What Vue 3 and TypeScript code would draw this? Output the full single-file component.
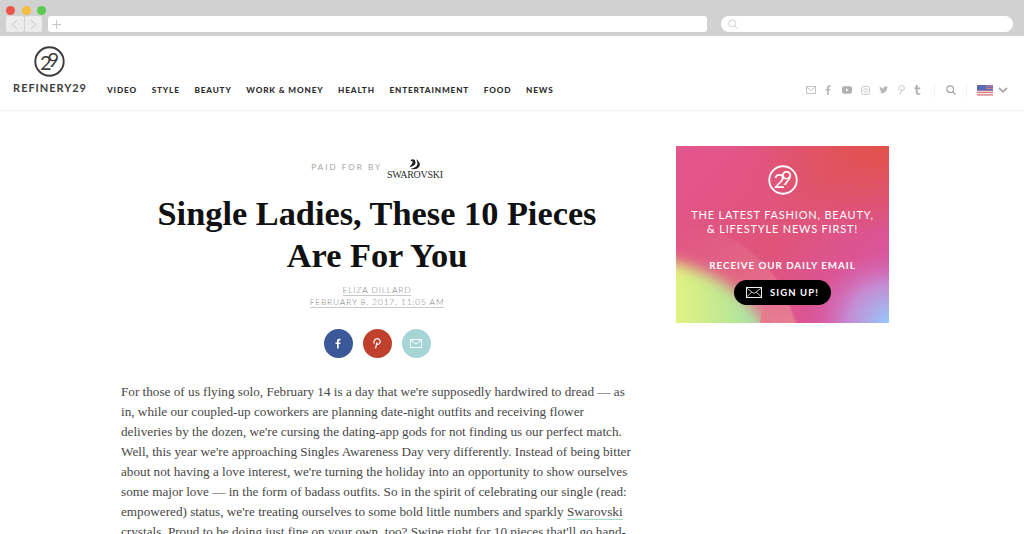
<script setup lang="ts">
const nav: string[] = ['VIDEO', 'STYLE', 'BEAUTY', 'WORK & MONEY', 'HEALTH', 'ENTERTAINMENT', 'FOOD', 'NEWS']
const lines: string[] = [
  "For those of us flying solo, February 14 is a day that we're supposedly hardwired to dread — as",
  "in, while our coupled-up coworkers are planning date-night outfits and receiving flower",
  "deliveries by the dozen, we're cursing the dating-app gods for not finding us our perfect match.",
  "Well, this year we're approaching Singles Awareness Day very differently. Instead of being bitter",
  "about not having a love interest, we're turning the holiday into an opportunity to show ourselves",
  "some major love — in the form of badass outfits. So in the spirit of celebrating our single (read:",
]
</script>

<template>
  <div class="page">
    <div class="chrome">
      <div class="dots">
        <i class="dot red"></i><i class="dot yellow"></i><i class="dot green"></i>
      </div>
      <div class="toolbar">
        <div class="arrows">
          <span class="arrow">
            <svg width="7" height="11" viewBox="0 0 7 11"><path d="M6 1 1.500 5.500 6 10" fill="none" stroke="#c4c4c4" stroke-width="1"/></svg>
          </span>
          <span class="arrow">
            <svg width="7" height="11" viewBox="0 0 7 11"><path d="M1 1 5.500 5.500 1 10" fill="none" stroke="#c4c4c4" stroke-width="1"/></svg>
          </span>
        </div>
        <div class="address">
          <svg width="9" height="9" viewBox="0 0 9 9"><path d="M4.500 0v9M0 4.500h9" stroke="#c8c8c8" stroke-width="1"/></svg>
        </div>
        <div class="search">
          <svg width="10" height="10" viewBox="0 0 10 10"><circle cx="4.300" cy="4.300" r="3.500" fill="none" stroke="#cfcfcf"/><path d="m7 7 2.500 2.500" stroke="#cfcfcf"/></svg>
        </div>
      </div>
    </div>

    <header class="header">
      <div class="brand">
        <svg class="brand-mark" width="31" height="31" viewBox="0 0 31 31">
          <circle cx="15.500" cy="15.500" r="14.200" fill="none" stroke="#3c3c3c" stroke-width="1.900"/>
          <text x="6" y="24" class="mark-text" fill="#3c3c3c">2<tspan dy="-3">9</tspan></text>
        </svg>
        <div class="brand-name">REFINERY29</div>
      </div>
      <nav class="nav">
        <a v-for="item in nav" :key="item" class="nav-item">{{ item }}</a>
      </nav>
      <div class="tools">
        <svg class="tool" width="10" height="8" viewBox="0 0 10 8"><rect x=".5" y=".5" width="9" height="7" fill="none" stroke="#c4c4c4"/><path d="m.5 1 4.500 3.500L9.500 1" fill="none" stroke="#c4c4c4"/></svg>
        <svg class="tool wide" width="6" height="10" viewBox="0 0 6 10"><path d="M2 10V5.500H.5V4H2V2.500C2 1 3 .3 4.200.3H5.500V2H4.500c-.5 0-.8.200-.8.700V4h1.800l-.3 1.500H3.700V10z" fill="#b8b8b8"/></svg>
        <svg class="tool" width="10" height="8" viewBox="0 0 11 8"><rect width="11" height="8" rx="2" fill="#b0b0b0"/><path d="m4.500 2.200 2.700 1.800-2.700 1.800z" fill="#fff"/></svg>
        <svg class="tool" width="9" height="9" viewBox="0 0 9 9"><rect x=".5" y=".5" width="8" height="8" rx="2" fill="none" stroke="#c8c8c8"/><circle cx="4.500" cy="4.500" r="1.800" fill="none" stroke="#c8c8c8"/></svg>
        <svg class="tool mid" width="9" height="8" viewBox="0 0 9 8"><path d="M9 1c-.3.200-.7.300-1 .3.400-.2.600-.5.800-.9-.4.200-.7.300-1.100.4A1.800 1.800 0 0 0 4.600 2.400C3.100 2.300 1.800 1.600.9.500.4 1.300.6 2.400 1.400 3c-.3 0-.6-.1-.8-.2 0 .9.600 1.600 1.400 1.800-.3.100-.5.100-.8 0 .2.700.9 1.200 1.700 1.300A3.700 3.700 0 0 1 0 6.600C3.900 8.600 8.300 6 8.100 2c.4-.3.700-.6.900-1z" fill="#b8b8b8"/></svg>
        <svg class="tool" width="7" height="10" viewBox="0 0 7 10"><path d="M2.200 9.500 3.500 4M1 5C.2 2.800 1.700 .6 3.700 .6c2.300 0 3 2 2.500 3.600C5.700 5.800 4 6.300 3 5.200" fill="none" stroke="#c4c4c4" stroke-width="1"/></svg>
        <svg class="tool last" width="7" height="10" viewBox="0 0 7 10"><path d="M2 0h1.700v2.500h2.400V4.300H3.700v3c0 1 1 1.100 2.600.6v1.500C3.800 10.300 1.800 9.800 1.800 7.500V4.300H.5V3C1.500 2.700 1.900 1.500 2 0z" fill="#b0b0b0"/></svg>
        <i class="divider"></i>
        <svg class="tool-search" width="10" height="10" viewBox="0 0 10 10"><circle cx="4.200" cy="4.200" r="3.300" fill="none" stroke="#a8a8a8" stroke-width="1.200"/><path d="m6.700 6.700 2.800 2.800" stroke="#a8a8a8" stroke-width="1.400"/></svg>
        <i class="divider"></i>
        <svg class="flag" width="16" height="11" viewBox="0 0 16 11">
          <rect width="16" height="11" fill="#f4f1f3"/>
          <path d="M0 .8h16M0 3h16M0 5.200h16M0 7.400h16M0 9.800h16" stroke="#de7079" stroke-width="1.200"/>
          <rect width="16" height="5.500" fill="#4a64b8" opacity=".92"/>
          <path d="M9 1h7M9 3.300h7" stroke="#e58088" stroke-width="1"/>
        </svg>
        <svg width="10" height="6" viewBox="0 0 10 6"><path d="M1 1 5 4.800 9 1" fill="none" stroke="#a9a9a9" stroke-width="1.800"/></svg>
      </div>
    </header>

    <main class="main">
      <article class="article">
        <div class="sponsor">
          <span class="paid">PAID FOR BY</span>
          <div class="swarovski">
            <svg width="13" height="11" viewBox="0 0 14 12"><path d="M5 .3C3.600.3 2.800 1.200 2.800 2.400c.8-.6 2-.4 2.200.5.300 1.400-1.600 3.200-3.400 6 3.600-.4 6.400-2.300 6.500-5C8.200 2.100 6.800.3 5 .3zM9.500 0C8.800 2.500 10.800 3.500 10.200 6 9.600 8.500 6.500 10 2.800 10.600c3.900 1.400 8.400.2 9.800-3.300C13.800 4.300 10.800 2.800 9.500 0z" fill="#1e1e1e"/></svg>
            <span class="swarovski-name">SWAROVSKI</span>
          </div>
        </div>
        <h1 class="title">Single Ladies, These 10 Pieces<br>Are For You</h1>
        <div class="byline"><span>ELIZA DILLARD</span></div>
        <div class="byline date"><span>FEBRUARY 8, 2017, 11:05 AM</span></div>
        <div class="share">
          <span class="round fb">
            <svg width="6" height="11" viewBox="0 0 6 10"><path d="M2 10V5.500H.5V4H2V2.500C2 1 3 .3 4.200.3H5.500V2H4.500c-.5 0-.8.200-.8.700V4h1.800l-.3 1.500H3.700V10z" fill="#fff"/></svg>
          </span>
          <span class="round pin">
            <svg width="8" height="11" viewBox="0 0 7 10"><path d="M2.200 9.500 3.500 4M1 5C.2 2.800 1.700 .6 3.700 .6c2.300 0 3 2 2.500 3.600C5.700 5.800 4 6.300 3 5.200" fill="none" stroke="#fff" stroke-width="1.100"/></svg>
          </span>
          <span class="round mail">
            <svg width="12" height="9" viewBox="0 0 12 9"><rect x=".5" y=".5" width="11" height="8" fill="none" stroke="#fff"/><path d="m.5 1 5.500 4 5.500-4" fill="none" stroke="#fff"/></svg>
          </span>
        </div>
        <div class="body">
          <p v-for="line in lines" :key="line" class="line">{{ line }}</p>
          <p class="line">empowered) status, we're treating ourselves to some bold little numbers and sparkly <a class="link">Swarovski</a></p>
          <p class="line">crystals. Proud to be doing just fine on your own, too? Swipe right for 10 pieces that'll go hand-</p>
        </div>
      </article>

      <aside class="ad">
        <svg class="ad-art" width="213" height="177" viewBox="0 0 213 177" preserveAspectRatio="none">
          <defs>
            <linearGradient id="adBase" x1="0" y1="0" x2="1" y2=".75">
              <stop offset="0" stop-color="#e3568f"/>
              <stop offset=".55" stop-color="#df5478"/>
              <stop offset="1" stop-color="#d955a2"/>
            </linearGradient>
            <radialGradient id="adRed" cx="1" cy="0" r="1">
              <stop offset="0" stop-color="#e2524a"/>
              <stop offset="1" stop-color="#e2524a" stop-opacity="0"/>
            </radialGradient>
            <radialGradient id="adBlue" cx="1" cy="1" r="1">
              <stop offset="0" stop-color="#96c8fb"/>
              <stop offset=".5" stop-color="#c58bd2"/>
              <stop offset="1" stop-color="#d955a2" stop-opacity="0"/>
            </radialGradient>
            <linearGradient id="adGreen" x1="0" y1="0" x2="1" y2="0">
              <stop offset="0" stop-color="#eff77c"/>
              <stop offset=".5" stop-color="#c5ea8e"/>
              <stop offset="1" stop-color="#9bdfb0"/>
            </linearGradient>
            <linearGradient id="adSalmon" x1="0" y1="0" x2="1" y2="1">
              <stop offset="0" stop-color="#e36f92" stop-opacity="0"/>
              <stop offset="1" stop-color="#ea8493"/>
            </linearGradient>
            <filter id="adBlur1" x="-30%" y="-30%" width="160%" height="160%"><feGaussianBlur stdDeviation="7"/></filter>
            <filter id="adBlur2" x="-30%" y="-30%" width="160%" height="160%"><feGaussianBlur stdDeviation="1.200"/></filter>
          </defs>
          <rect width="213" height="177" fill="url(#adBase)"/>
          <rect x="70" width="143" height="90" fill="url(#adRed)"/>
          <rect x="130" y="100" width="83" height="77" fill="url(#adBlue)"/>
          <path d="M0 80C40 78 85 100 110 150L125 190H0z" fill="url(#adSalmon)" filter="url(#adBlur2)"/>
          <path d="M-20 112C30 122 75 142 100 200H-20z" fill="url(#adGreen)" filter="url(#adBlur1)"/>
          <path d="M84 177 87 162 97 177z" fill="#e77a8a"/>
        </svg>
        <svg class="ad-logo" width="30" height="30" viewBox="0 0 31 31">
          <circle cx="15.500" cy="15.500" r="14.200" fill="none" stroke="#fff" stroke-width="1.900"/>
          <text x="6" y="24" class="mark-text" fill="#fff">2<tspan dy="-3">9</tspan></text>
        </svg>
        <div class="ad-head">THE LATEST FASHION, BEAUTY,<br>&amp; LIFESTYLE NEWS FIRST!</div>
        <div class="ad-sub">RECEIVE OUR DAILY EMAIL</div>
        <div class="ad-btn">
          <svg width="16" height="11" viewBox="0 0 16 11"><rect x=".5" y=".5" width="15" height="10" fill="none" stroke="#eee"/><path d="m.5 1 7.500 5.500L15.500 1M.5 10 6 5M15.500 10 10 5" fill="none" stroke="#eee" stroke-width=".8"/></svg>
          <span>SIGN UP!</span>
        </div>
      </aside>
    </main>
  </div>
</template>

<style>
html, body { margin: 0; background: #fff; overflow: hidden; }
</style>

<style scoped>
.page { width: 1024px; height: 534px; overflow: hidden; background: #fff; font-family: "Lato", sans-serif; }

.chrome { height: 36px; background: #d1d1d1; box-sizing: border-box; padding-top: 4px; }
.dots { display: flex; gap: 6.500px; padding-left: 6px; height: 12px; align-items: center; }
.dot { width: 9px; height: 9px; border-radius: 50%; display: block; }
.red { background: #ec5349; }
.yellow { background: #f5bd3e; }
.green { background: #5cc94f; }
.toolbar { display: flex; height: 16px; padding-left: 6px; }
.arrows { display: flex; gap: 1px; }
.arrow { width: 17.500px; height: 16px; background: #ececec; display: flex; align-items: center; justify-content: center; border-radius: 2px; }
.address { width: 659px; margin-left: 6px; background: #fff; border-radius: 3px; display: flex; align-items: center; padding-left: 4px; box-sizing: border-box; }
.search { width: 292px; margin-left: 14px; background: #fff; border-radius: 8px; display: flex; align-items: center; padding-left: 7px; box-sizing: border-box; }

.header { height: 75px; box-sizing: border-box; border-bottom: 1px solid #f1f1f1; display: flex; align-items: flex-end; position: relative; }
.brand { width: 72px; margin-left: 14px; display: flex; flex-direction: column; align-items: center; padding-bottom: 16px; }
.brand-mark { display: block; margin-bottom: 4px; margin-left: -1px; }
.brand-name { font-size: 11px; font-weight: 700; color: #3e3e3e; letter-spacing: .950px; line-height: 13px; white-space: nowrap; }
.mark-text { font-family: "Lato", sans-serif; font-weight: 400; font-size: 20px; letter-spacing: -4.200px; }
.nav { display: flex; gap: 14.700px; margin-left: 21px; padding-bottom: 14px; }
.nav-item { font-size: 8.200px; font-weight: 900; color: #2d2d2d; letter-spacing: .850px; line-height: 12px; white-space: nowrap; }
.tools { position: absolute; left: 806px; top: 47px; display: flex; align-items: center; height: 14px; }
.tool { margin-right: 9px; display: block; }
.tool.wide { margin-right: 11px; }
.tool.mid { margin-right: 10px; }
.tool.last { margin-right: 13px; }
.divider { width: 1px; height: 14px; background: #f1f1f1; display: block; }
.tool-search { margin: 0 10px 0 11px; }
.flag { margin: 0 5px 0 10px; }

.main { display: flex; align-items: flex-start; }
.article { width: 512px; margin-left: 121px; display: flex; flex-direction: column; align-items: center; }
.sponsor { display: flex; align-items: flex-end; justify-content: center; height: 25px; margin-top: 45px; gap: 5px; box-sizing: border-box; width: 100%; }
.paid { font-size: 8px; color: #a3a3a3; letter-spacing: 2.050px; line-height: 10px; font-weight: 400; padding-bottom: 9px; }
.swarovski { display: flex; flex-direction: column; align-items: center; }
.swarovski svg { margin-bottom: -1px; }
.swarovski-name { font-family: "Liberation Serif", serif; font-size: 10px; color: #2b2b2b; line-height: 11px; letter-spacing: -0.300px; padding-bottom: 1px; }
.title { margin: 11px 0 0; font-family: "Liberation Serif", serif; font-weight: 700; font-size: 34.350px; line-height: 42px; color: #111; text-align: center; white-space: nowrap; }
.byline { font-size: 8.300px; font-weight: 300; letter-spacing: .900px; color: #808080; line-height: 12px; margin-top: 8px; }
.byline span { border-bottom: 1px solid #c9c9c9; }
.date { margin-top: 0; }
.share { display: flex; gap: 10px; margin-top: 21px; }
.round { width: 29px; height: 29px; border-radius: 50%; display: flex; align-items: center; justify-content: center; }
.fb { background: #3b5998; }
.pin { background: #c0402e; }
.mail { background: #a6d5d6; }
.body { margin-top: 24px; width: 100%; font-family: "Liberation Serif", serif; font-size: 13.200px; line-height: 20px; color: #474747; }
.line { margin: 0; white-space: nowrap; }
.link { border-bottom: 1px solid #9fe0cd; }

.ad { width: 213px; height: 177px; margin: 35px 0 0 43px; flex: none; display: flex; flex-direction: column; align-items: center; padding-top: 19px; box-sizing: border-box; color: #fff; position: relative; overflow: hidden; }
.ad-art { position: absolute; left: 0; top: 0; display: block; }
.ad-logo, .ad-head, .ad-sub, .ad-btn { position: relative; }
.ad-head { margin-top: 13px; font-size: 11px; line-height: 14px; letter-spacing: .800px; text-align: center; font-weight: 400; white-space: nowrap; }
.ad-sub { margin-top: 23px; font-size: 9.800px; line-height: 13px; letter-spacing: .950px; font-weight: 700; white-space: nowrap; }
.ad-btn { margin-top: 8px; width: 97px; height: 25px; border-radius: 13px; background: #000; display: flex; align-items: center; justify-content: center; gap: 8px; font-size: 9.500px; letter-spacing: 1.100px; font-weight: 700; }
</style>
